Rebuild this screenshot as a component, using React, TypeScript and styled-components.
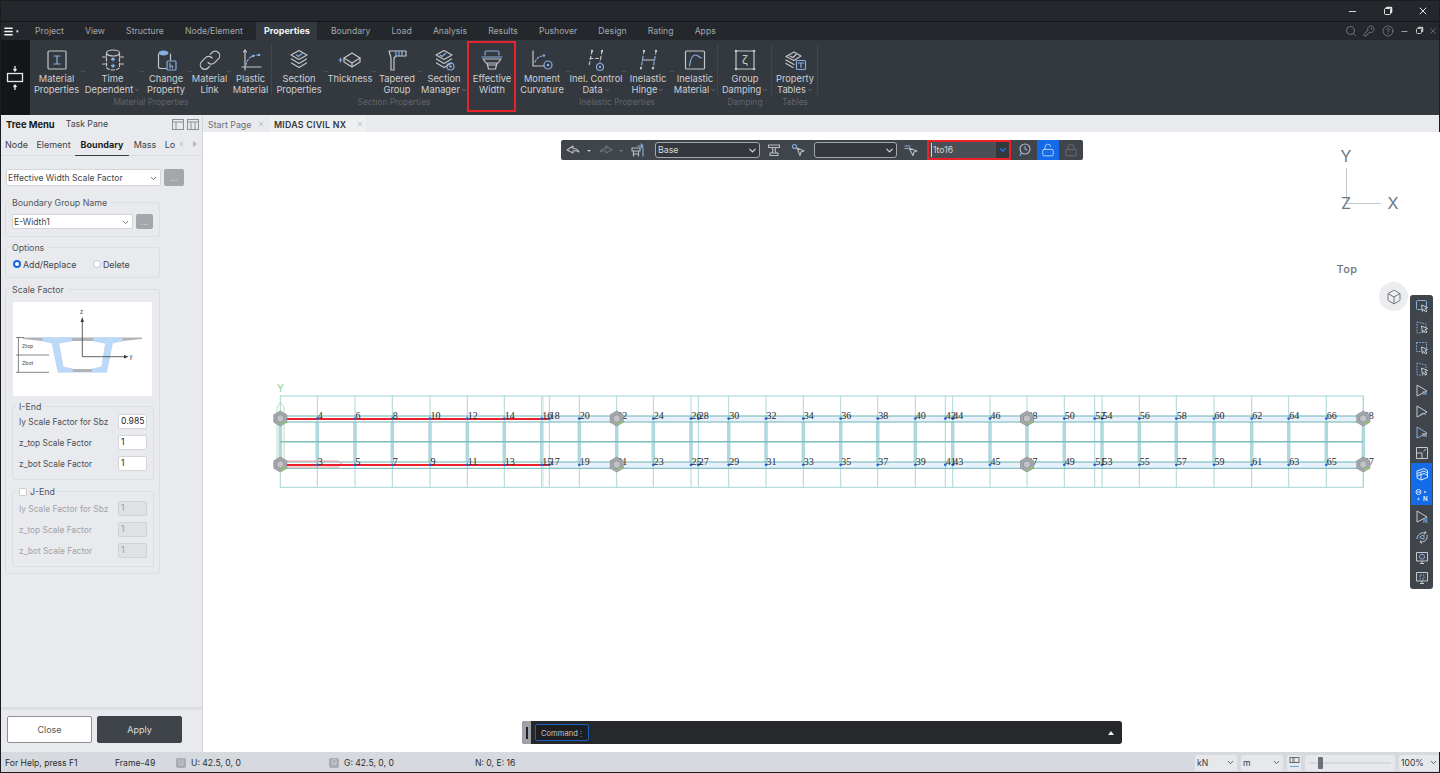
import React from 'react';
import styled, { createGlobalStyle } from 'styled-components';
import { ChevronDown, Search, KeyRound, CircleHelp, X, Minus, Box, LockOpen, Lock, Menu } from 'lucide-react';

const Global = createGlobalStyle`
    html, body { margin: 0; padding: 0; background: #fff; }
    * { box-sizing: border-box; }
    body { font-family: Inter, "Noto Sans", sans-serif; }
`;

const Frame = styled.div`
    width: 1440px;
    height: 773px;
    display: flex;
    flex-direction: column;
    overflow: hidden;
    outline: 1px solid #1a1c1f;
    outline-offset: -1px;
    position: relative;
`;

const TitleBar = styled.div`
    height: 22px;
    background: #24272b;
    border-top: 1px solid #0e0f11;
    border-bottom: 1px solid #14161a;
    display: flex;
    justify-content: flex-end;
    align-items: center;
    color: #e4e6e8;
    padding-right: 11px;
    gap: 26px;
`;

const RestoreGlyph = styled.span<{ $size: number; $color: string }>`
    width: ${p => p.$size}px;
    height: ${p => p.$size}px;
    display: block;
    border: 1.3px solid ${p => p.$color};
    border-radius: 1.5px;
    box-shadow: 1.5px -1.5px 0 -0.2px ${p => p.$color};
`;

const MenuRow = styled.div`
    height: 18px;
    background: #24272b;
    display: flex;
    align-items: stretch;
`;

const Burger = styled.div`
    width: 24.5px;
    display: flex;
    align-items: center;
    padding-left: 3px;
    color: #f0f1f2;
    font-size: 5px;
    gap: 2px;
`;

const MenuTab = styled.div<{ $active?: boolean }>`
    padding: 0 10.6px;
    font-size: 8.65px;
    line-height: 18px;
    font-weight: ${p => (p.$active ? 700 : 400)};
    color: ${p => (p.$active ? '#f4f5f6' : '#a3a8ae')};
    background: ${p => (p.$active ? '#34383f' : 'transparent')};
    ${p => p.$active && 'padding: 0 7.5px; margin: 0 3px; font-size: 9px;'}
`;

const MenuTools = styled.div`
    margin-left: auto;
    display: flex;
    align-items: center;
    gap: 6.5px;
    padding-right: 2px;
    color: #8d9298;
`;

const Ribbon = styled.div`
    height: 76px;
    background: #34383f;
    display: flex;
    border-bottom: 1px solid #eceef0;
`;

const CollapseBox = styled.div`
    width: 30px;
    background: #14171a;
    display: flex;
    align-items: center;
    justify-content: center;
    color: #e6e7e9;
`;

const Group = styled.div<{ $sep?: boolean }>`
    display: flex;
    flex-direction: column;
    position: relative;
    &::after {
        content: '';
        display: ${p => (p.$sep ? 'block' : 'none')};
        position: absolute;
        right: 0;
        top: 4px;
        height: 51px;
        width: 1px;
        background: #42464d;
    }
`;

const GroupItems = styled.div`
    display: flex;
    height: 56px;
`;

const GroupName = styled.div`
    font-size: 8.4px;
    line-height: 12px;
    text-align: center;
    color: #5f646b;
`;

const Item = styled.div<{ $w: number; $mark?: boolean; $tick?: boolean }>`
    width: ${p => p.$w}px;
    position: relative;
    display: flex;
    flex-direction: column;
    align-items: center;
    padding-top: 8px;
    &::before {
        content: '';
        display: ${p => (p.$mark ? 'block' : 'none')};
        position: absolute;
        left: -1px;
        right: 0;
        top: 1px;
        height: 67px;
        border: 2px solid #e8232b;
        z-index: 2;
    }
    &::after {
        content: '';
        display: ${p => (p.$tick ? 'block' : 'none')};
        position: absolute;
        right: -2px;
        top: 31px;
        width: 4px;
        height: 1px;
        background: #4a4e55;
    }
`;

const ItemIcon = styled.svg`
    width: 24px;
    height: 24px;
    display: block;
    fill: none;
    stroke: #c3c7cb;
    stroke-width: 1.2;
    stroke-linecap: round;
    stroke-linejoin: round;
    .b { stroke: #86aee0; }
    .f { fill: #86aee0; stroke: none; }
    .w { fill: #c3c7cb; stroke: none; }
    .t { font-family: Inter, sans-serif; stroke: none; fill: #c3c7cb; }
`;

const ItemLabel = styled.div`
    margin-top: 2px;
    font-size: 9.3px;
    line-height: 10.6px;
    text-align: center;
    color: #ced1d4;
    white-space: nowrap;
`;

const Drop = styled(ChevronDown)`
    display: inline-block;
    vertical-align: -0.5px;
    margin-left: 1px;
    color: #9ea2a7;
`;

const Main = styled.div`
    flex: 1;
    display: flex;
    min-height: 0;
`;

const Panel = styled.div`
    width: 203px;
    background: #e9eaed;
    border-right: 1px solid #d3d5d9;
    display: flex;
    flex-direction: column;
    color: #41464c;
`;

const PaneTabs = styled.div`
    height: 16px;
    display: flex;
    align-items: center;
    padding-left: 6px;
`;

const PaneTab = styled.span<{ $on?: boolean }>`
    font-size: ${p => (p.$on ? '9.4px' : '8.7px')};
    font-weight: ${p => (p.$on ? 700 : 400)};
    color: ${p => (p.$on ? '#16181b' : '#3e4349')};
    margin-right: ${p => (p.$on ? '11px' : '0')};
`;

const PaneIcons = styled.div`
    margin-left: auto;
    display: flex;
    gap: 3px;
    margin-right: 3px;
`;

const PaneGlyph = styled.svg`
    width: 12px;
    height: 11px;
    fill: none;
    stroke: #8b9096;
    stroke-width: 1;
`;

const SubTabs = styled.div`
    height: 24px;
    display: flex;
    align-items: center;
    padding: 4px 0 0 1px;
    border-bottom: 1px solid #dcdee2;
    font-size: 9px;
    color: #3c4147;
`;

const SubTab = styled.span<{ $on?: boolean; $w: number }>`
    width: ${p => p.$w}px;
    height: 20px;
    line-height: 17px;
    text-align: center;
    font-weight: ${p => (p.$on ? 700 : 400)};
    color: ${p => (p.$on ? '#1c1e21' : 'inherit')};
    border-bottom: ${p => (p.$on ? '1.5px solid #3a3e44' : 'none')};
    white-space: nowrap;
`;

const SubArrow = styled.span<{ $right?: boolean; $ml: number }>`
    width: 0;
    height: 0;
    margin: -3px 0 0 ${p => p.$ml}px;
    border-top: 3px solid transparent;
    border-bottom: 3px solid transparent;
    border-right: ${p => (p.$right ? 'none' : '4px solid #cfd1d4')};
    border-left: ${p => (p.$right ? '4px solid #b3b6ba' : 'none')};
`;

const PanelBody = styled.div`
    flex: 1;
    padding: 13px 0 0 5px;
    width: 202px;
`;

const Row = styled.div`
    display: flex;
    gap: 3px;
`;

const Combo = styled.div<{ $w: number; $h: number }>`
    width: ${p => p.$w}px;
    height: ${p => p.$h}px;
    background: #fff;
    border: 1px solid #d3d5d9;
    border-radius: 2px;
    font-size: 8.6px;
    padding: 1px 2px 0 1px;
    color: #41464c;
    display: flex;
    justify-content: space-between;
    align-items: center;
    margin-left: ${p => (p.$w > 140 ? '1px' : '0')};
`;

const MoreBtn = styled.div<{ $w: number; $h: number }>`
    width: ${p => p.$w}px;
    height: ${p => p.$h}px;
    background: #a3a7ac;
    border-radius: 2px;
    color: #e3e4e6;
    font-size: 8px;
    line-height: ${p => p.$h + 1}px;
    text-align: center;
`;

const Field = styled.fieldset<{ $inner?: boolean; $gap?: number; $pad: string }>`
    margin: ${p => p.$gap ?? 5}px ${p => (p.$inner ? '-2px' : '0')} 0 ${p => (p.$inner ? '-1px' : '0')};
    padding: ${p => p.$pad};
    width: ${p => (p.$inner ? 'auto' : '155px')};
    min-width: 0;
    border: 1px solid #dcdee2;
    border-radius: 3px;
`;

const Legend = styled.legend<{ $ml?: number }>`
    margin-left: ${p => p.$ml ?? -3}px;
    padding: 0 3px;
    font-size: 8.8px;
    line-height: 11px;
    color: #50555b;
    display: flex;
    align-items: center;
    gap: 3px;
`;

const Options = styled.div`
    display: flex;
    height: 12px;
    align-items: center;
    font-size: 8.8px;
    padding-left: 1px;
    margin-top: -1px;
`;

const Radio = styled.span<{ $on?: boolean }>`
    width: 8px;
    height: 8px;
    border-radius: 50%;
    margin-right: 2px;
    background: #fff;
    border: ${p => (p.$on ? '2.3px solid #1468e0' : '1px solid #c9cbcf')};
`;

const OptionText = styled.span<{ $w?: number }>`
    width: ${p => p.$w ?? 0}px;
    white-space: nowrap;
`;

const Sketch = styled.svg`
    display: block;
    width: 139px;
    height: 94px;
    background: #fff;
    border-radius: 1px;
`;

const FactorRow = styled.div`
    display: flex;
    justify-content: space-between;
    align-items: center;
    height: 15px;
    margin-bottom: 6px;
    &:last-child { margin-bottom: 0; }
`;

const FactorLabel = styled.span<{ $off?: boolean }>`
    font-size: 8.4px;
    color: ${p => (p.$off ? '#a0a4a9' : '#4a4f55')};
    white-space: nowrap;
`;

const FactorInput = styled.div<{ $off?: boolean }>`
    width: 29px;
    height: 15px;
    font-size: 8.6px;
    line-height: 13px;
    padding-left: 2px;
    border-radius: 2px;
    background: ${p => (p.$off ? '#dfe1e4' : '#fff')};
    border: 1px solid ${p => (p.$off ? '#d0d2d6' : '#d3d5d9')};
    color: ${p => (p.$off ? '#999da2' : '#24272a')};
`;

const Check = styled.span`
    width: 8px;
    height: 8px;
    background: #fff;
    border: 1px solid #c9cbcf;
    border-radius: 1.5px;
`;

const PanelFoot = styled.div`
    height: 45px;
    border-top: 3px solid #dcdee1;
    display: flex;
    gap: 5px;
    padding: 6px 0 0 7px;
`;

const FootBtn = styled.div<{ $primary?: boolean }>`
    width: 85px;
    height: 27px;
    border-radius: 2px;
    font-size: 9px;
    line-height: 26px;
    text-align: center;
    background: ${p => (p.$primary ? '#3f444a' : '#fff')};
    border: 1px solid ${p => (p.$primary ? '#3f444a' : '#8c9095')};
    color: ${p => (p.$primary ? '#dadcde' : '#55595f')};
`;

const Work = styled.div`
    flex: 1;
    display: flex;
    flex-direction: column;
    min-width: 0;
`;

const DocTabs = styled.div`
    height: 16px;
    background: #e9eaed;
    display: flex;
    font-size: 8.8px;
    align-items: center;
`;

const DocTab = styled.div<{ $w: number; $on?: boolean }>`
    width: ${p => p.$w}px;
    height: 16px;
    padding: 0 2px 0 ${p => (p.$on ? '4px' : '5px')};
    margin-right: ${p => (p.$on ? '0' : '3px')};
    display: flex;
    align-items: center;
    justify-content: space-between;
    background: ${p => (p.$on ? '#eeeff1' : '#e9eaed')};
    color: ${p => (p.$on ? '#33373c' : '#6b7076')};
    font-weight: ${p => (p.$on ? 600 : 400)};
    letter-spacing: ${p => (p.$on ? '0.25px' : '0')};
    white-space: nowrap;
    svg { color: #a5a9ae; }
`;

const Viewport = styled.div`
    flex: 1;
    position: relative;
    background: #fff;
`;

const ModelCanvas = styled.svg`
    position: absolute;
    left: 0;
    top: 0;
    width: 1237px;
    height: 620px;
`;

const NodeNo = styled.text`
    font-family: "Liberation Serif", serif;
    font-size: 10px;
    fill: #26292c;
`;

const FloatBar = styled.div`
    position: absolute;
    left: 358px;
    top: 8px;
    width: 522px;
    height: 20px;
    background: #40454b;
    border-radius: 2px;
    display: flex;
    align-items: center;
    padding-left: 5px;
    color: #bfc3c7;
`;

const BarIcon = styled.svg<{ $ml?: number; $dim?: boolean }>`
    width: 14px;
    height: 14px;
    margin-left: ${p => p.$ml ?? 0}px;
    flex: none;
    fill: none;
    stroke: ${p => (p.$dim ? '#6e7379' : '#b9bdc1')};
    stroke-width: 1.1;
    stroke-linejoin: round;
    stroke-linecap: round;
    .b { stroke: #86aee0; }
`;

const Caret = styled.span<{ $dim?: boolean; $l: number; $r: number }>`
    width: 0;
    height: 0;
    flex: none;
    margin: 1px ${p => p.$r}px 0 ${p => p.$l}px;
    border-left: 2px solid transparent;
    border-right: 2px solid transparent;
    border-top: 2.5px solid ${p => (p.$dim ? '#777b80' : '#c8cbce')};
`;

const BarSelect = styled.div<{ $w: number; $ml: number }>`
    width: ${p => p.$w}px;
    height: 16px;
    margin-left: ${p => p.$ml}px;
    flex: none;
    border: 1px solid #a4a8ac;
    border-radius: 3px;
    background: #34383d;
    color: #d5d7d9;
    font-size: 8.8px;
    line-height: 14px;
    padding: 0 1px 0 2px;
    display: flex;
    justify-content: space-between;
    align-items: center;
`;

const RangeSelect = styled.div`
    width: 84px;
    height: 20px;
    margin-left: 9px;
    flex: none;
    border: 2px solid #e8232b;
    background: #4a4f55;
    color: #d5d7d9;
    font-size: 8.6px;
    line-height: 14px;
    padding: 0 0 1px 2px;
    display: flex;
    justify-content: space-between;
    align-items: center;
    span:first-child { border-left: 1px solid #d5d7d9; padding-left: 1px; }
`;

const RangeArrow = styled.span`
    width: 13px;
    height: 16px;
    background: #34383d;
    color: #1d74f0;
    display: flex;
    align-items: center;
    justify-content: center;
`;

const LockBtn = styled.div<{ $on?: boolean; $dim?: boolean; $w: number }>`
    width: ${p => p.$w}px;
    height: 20px;
    background: ${p => (p.$on ? '#136be8' : 'transparent')};
    color: ${p => (p.$on ? '#dfe9f8' : p.$dim ? '#70757a' : '#b9bdc1')};
    display: flex;
    align-items: center;
    justify-content: center;
    flex: none;
`;

const AxisText = styled.span<{ $x: number; $y: number; $size?: number }>`
    position: absolute;
    left: ${p => p.$x}px;
    top: ${p => p.$y}px;
    transform: translate(-50%, -50%);
    font-size: ${p => p.$size ?? 16}px;
    letter-spacing: ${p => (p.$size ? '0.4px' : '0')};
    font-weight: ${p => (p.$size ? 500 : 400)};
    color: #6f767d;
    line-height: 1;
`;

const AxisLine = styled.div<{ $horizontal?: boolean }>`
    position: absolute;
    background: #c2c7cb;
    left: 1143px;
    top: ${p => (p.$horizontal ? '71px' : '36px')};
    width: ${p => (p.$horizontal ? '35px' : '1px')};
    height: ${p => (p.$horizontal ? '1px' : '35px')};
`;

const CubeBtn = styled.div`
    position: absolute;
    left: 1176px;
    top: 150px;
    width: 29px;
    height: 29px;
    border-radius: 50%;
    background: #ebedef;
    color: #5d6369;
    display: flex;
    align-items: center;
    justify-content: center;
`;

const SideBar = styled.div`
    position: absolute;
    left: 1207px;
    top: 163px;
    width: 23px;
    height: 294px;
    background: #40454b;
    border-radius: 3px;
    padding-top: 1px;
    display: flex;
    flex-direction: column;
    align-items: center;
`;

const SideBtn = styled.div<{ $on?: boolean }>`
    width: 21px;
    height: 21px;
    background: ${p => (p.$on ? '#136be8' : 'transparent')};
    display: flex;
    align-items: center;
    justify-content: center;
`;

const SideIcon = styled.svg`
    width: 14px;
    height: 14px;
    fill: none;
    stroke: #9fa9b5;
    stroke-width: 1;
    stroke-linejoin: round;
    .b { stroke: #86aee0; }
    .w { stroke: #c6cacd; }
    .d { stroke-dasharray: 1.6 1.2; }
    .t { font-family: Inter, sans-serif; stroke: none; fill: #d9e6f7; font-weight: 700; }
    .tb { font-family: Inter, sans-serif; stroke: none; fill: #6ea2e6; font-weight: 700; }
`;

const CommandBar = styled.div`
    position: absolute;
    left: 319px;
    top: 589px;
    width: 600px;
    height: 23px;
    background: #26282c;
    border-radius: 3px;
    display: flex;
    align-items: center;
    overflow: hidden;
`;

const Handle = styled.div`
    width: 9px;
    height: 23px;
    background: #9ea2a6;
    display: flex;
    align-items: center;
    justify-content: center;
    &::after {
        content: '';
        width: 2px;
        height: 12px;
        background: #1f2124;
    }
`;

const CommandBox = styled.div`
    width: 54px;
    height: 17px;
    margin-left: 4px;
    border: 1px solid #1a5fc4;
    border-radius: 2px;
    background: #1c1e21;
    color: #c4c7ca;
    font-size: 7.6px;
    line-height: 17px;
    padding-left: 5px;
    position: relative;
    &::after {
        content: '⋮';
        position: absolute;
        right: 3px;
        top: 0;
        color: #8f9397;
    }
`;

const CommandUp = styled.span`
    margin-left: auto;
    margin-right: 8px;
    width: 0;
    height: 0;
    border-left: 3px solid transparent;
    border-right: 3px solid transparent;
    border-bottom: 4px solid #eceded;
`;

const StatusBar = styled.div`
    height: 21px;
    background: #d6d9dd;
    display: flex;
    align-items: center;
    font-size: 8.6px;
    color: #2b2e32;
    padding-top: 1px;
`;

const StatusCell = styled.div<{ $w: number; $pl?: number }>`
    width: ${p => p.$w}px;
    padding-left: ${p => p.$pl ?? 0}px;
    display: flex;
    align-items: center;
    white-space: nowrap;
`;

const Badge = styled.span`
    width: 10px;
    height: 10px;
    background: #a9adb2;
    color: #d6d9dd;
    border-radius: 2px;
    font-size: 7px;
    line-height: 10px;
    text-align: center;
    margin-right: 5px;
`;

const StatusRight = styled.div`
    margin-left: auto;
    display: flex;
    align-items: center;
    gap: 4px;
    margin-top: -1px;
`;

const UnitSelect = styled.div<{ $w: number }>`
    width: ${p => p.$w}px;
    height: 16px;
    background: #e6e8eb;
    border-radius: 2px;
    padding: 0 2px;
    display: flex;
    justify-content: space-between;
    align-items: center;
    font-size: 8.6px;
    color: #33373b;
`;

const SliderBox = styled.div`
    width: 90px;
    height: 16px;
    background: #e6e8eb;
    border-radius: 2px;
    position: relative;
    &::before {
        content: '';
        position: absolute;
        left: 4px;
        right: 4px;
        top: 7px;
        height: 2px;
        background: #d5d8dc;
    }
`;

const Thumb = styled.span`
    position: absolute;
    left: 13px;
    top: 2px;
    width: 5px;
    height: 12px;
    background: #6c7177;
    border-radius: 1px;
`;

const UnitIcon = styled.div`
    width: 14px;
    height: 16px;
    background: #e6e8eb;
    border-radius: 2px;
    display: flex;
    align-items: center;
    justify-content: center;
`;

type IconProps = { name: string };

const cyl = 'M7 6c0-1.4 2.2-2.5 5-2.5s5 1.1 5 2.5-2.2 2.5-5 2.5S7 7.400 7 6z';

const stack = (
    <>
        <path d="M12 2.500 20 7l-8 4.500L4 7z" />
        <path d="M4.500 11 12 15.500 19.500 11" />
        <path d="M4.500 15 12 19.500 19.500 15" />
    </>
);

const RibbonIcon = ({ name }: IconProps) => {
    switch (name) {
        case 'material':
            return <ItemIcon viewBox="0 0 24 24"><rect x="3" y="3" width="18" height="18" rx="1" /><path className="b" d="M9 8h6M12 8v8M9 16h6" /></ItemIcon>;
        case 'time':
            return <ItemIcon viewBox="0 0 24 24"><ellipse cx="12" cy="5" rx="6.500" ry="3" /><path d="M5.500 5v14c0 1.700 2.900 3 6.500 3s6.500-1.300 6.500-3V5" strokeDasharray="3 2" /><path d="M1.500 9h4M22.500 9h-4M1.500 16h4M22.500 16h-4" /><path className="b" d="M12 10v3M12 16v3M10.500 11.500l1.500-1.500 1.500 1.500M10.500 17.500l1.500 1.500 1.500-1.500" /></ItemIcon>;
        case 'change':
            return <ItemIcon viewBox="0 0 24 24"><path className="f" d={cyl} transform="translate(-2.500 -1)" /><path d="M4.500 6v13c0 .8 1.500 1.500 3.500 1.500h4M16.500 6v6" /><rect className="b" x="13" y="13" width="9" height="9" rx="1" /><path className="b" d="M16 15v5M16 18h2.500v2" /></ItemIcon>;
        case 'link':
            return <ItemIcon viewBox="0 0 24 24"><path d="M10 14.500a4.500 4.500 0 0 0 6.400.4l4-4a4.500 4.500 0 0 0-6.400-6.400l-1.800 1.800" /><path d="M14 10a4.500 4.500 0 0 0-6.400-.4l-4 4a4.500 4.500 0 0 0 6.400 6.400l1.800-1.800" /></ItemIcon>;
        case 'plastic':
            return <ItemIcon viewBox="0 0 24 24"><path d="M6 2v20M3 19h19" /><path d="M4.500 4 6 2l1.500 2" /><path className="b" d="M7 17c1-6 5-10 12-10" strokeDasharray="2 2" /><circle className="f" cx="14" cy="8" r="1.300" /><circle className="f" cx="20" cy="7" r="1.300" /></ItemIcon>;
        case 'section':
            return <ItemIcon viewBox="0 0 24 24">{stack}<path className="b" d="m9.500 7 2 1.500 3.500-3" /></ItemIcon>;
        case 'thickness':
            return <ItemIcon viewBox="0 0 24 24"><path d="M14 5 22 10l-8 5-8-5z" /><path d="M6 10v4l8 5 8-5v-4M14 15v4" /><path className="b" d="M1 12h3M2.500 10v4" /></ItemIcon>;
        case 'tapered':
            return <ItemIcon viewBox="0 0 24 24"><path d="M4 3h17v5H11l-2 2v12H6V10z" /><path className="b" d="M11 3v5M14 3v5M17 3v5" /></ItemIcon>;
        case 'manager':
            return <ItemIcon viewBox="0 0 24 24">{stack}<path className="b" d="m8 7 2 1.500 3.500-3" /><circle className="b" cx="18.500" cy="18.500" r="3.500" /><circle className="f" cx="18.500" cy="18.500" r="1.300" /></ItemIcon>;
        case 'effective':
            return <ItemIcon viewBox="0 0 24 24"><path className="b" d="M5 7V4.500c0-1 .6-1.500 1.500-1.500h11c.9 0 1.500.5 1.500 1.500V7" /><path className="b" d="M2 9h20" /><path d="M3 11h18l-3 4H6zM7 15l1.500 6h7L17 15" /><path d="M8 17h8" /></ItemIcon>;
        case 'moment':
            return <ItemIcon viewBox="0 0 24 24"><path d="M3 3v15h11" /><path className="b" d="M5 14c1.500-3 3-5 7-6" strokeDasharray="2 2" /><circle className="f" cx="14" cy="7.500" r="1.200" /><circle className="b" cx="18" cy="17" r="4" /><circle className="f" cx="18" cy="17" r="1.300" /></ItemIcon>;
        case 'control':
            return <ItemIcon viewBox="0 0 24 24"><path d="M8 3 5 18M18 3l-2 11M6 10.500h11" strokeDasharray="3 2.500" /><circle className="w" cx="8" cy="3" r="1.200" /><circle className="w" cx="18" cy="3" r="1.200" /><circle className="b" cx="16" cy="19" r="3.500" /><circle className="f" cx="16" cy="19" r="1.200" /></ItemIcon>;
        case 'hinge':
            return <ItemIcon viewBox="0 0 24 24"><path className="b" d="M8 3 5 21M20 3l-3 18" strokeDasharray="3 2.500" /><path d="M6.500 12h12" /><circle className="w" cx="8" cy="3" r="1.200" /><circle className="w" cx="20" cy="3" r="1.200" /><circle className="w" cx="5" cy="20" r="1.200" /><circle className="w" cx="17" cy="20" r="1.200" /></ItemIcon>;
        case 'inelmat':
            return <ItemIcon viewBox="0 0 24 24"><rect x="2.500" y="3" width="19" height="18" rx="1" /><path className="b" d="M6.500 18c.8-7 2.500-11 6-11 2.500 0 3 2.500 6 3" /></ItemIcon>;
        case 'damping':
            return <ItemIcon viewBox="0 0 24 24"><rect x="3" y="3" width="18" height="18" /><circle className="w" cx="3" cy="3" r="1.300" /><circle className="w" cx="21" cy="3" r="1.300" /><circle className="w" cx="3" cy="21" r="1.300" /><circle className="w" cx="21" cy="21" r="1.300" /><text className="t" x="12" y="16" fontSize="12" textAnchor="middle">ζ</text></ItemIcon>;
        default:
            return <ItemIcon viewBox="0 0 24 24"><path d="M3 8.500 11 4l7 4-7 4.500z" /><path d="M3 12l8 4.500M3 15.500l7 4" /><path d="m7 8 3 1.500 3-3" /><rect className="b" x="13.500" y="12.500" width="9" height="9" rx="1" /><path className="b" d="M15.500 15h5M18 15v4.500" /></ItemIcon>;
    }
};

type ItemDef = { w: number; icon: string; a: string; b?: string; drop?: boolean; mark?: boolean; tick?: boolean };
type GroupDef = { name: string; items: ItemDef[] };

const groups: GroupDef[] = [
    {
        name: 'Material Properties',
        items: [
            { w: 53, icon: 'material', a: 'Material', b: 'Properties', tick: true },
            { w: 59, icon: 'time', a: 'Time', b: 'Dependent', drop: true, tick: true },
            { w: 48, icon: 'change', a: 'Change', b: 'Property', tick: true },
            { w: 39, icon: 'link', a: 'Material', b: 'Link', tick: true },
            { w: 43, icon: 'plastic', a: 'Plastic', b: 'Material' },
        ],
    },
    {
        name: 'Section Properties',
        items: [
            { w: 54, icon: 'section', a: 'Section', b: 'Properties', tick: true },
            { w: 48, icon: 'thickness', a: 'Thickness', tick: true },
            { w: 46, icon: 'tapered', a: 'Tapered', b: 'Group', tick: true },
            { w: 48, icon: 'manager', a: 'Section', b: 'Manager', drop: true },
            { w: 48, icon: 'effective', a: 'Effective', b: 'Width', mark: true },
        ],
    },
    {
        name: 'Inelastic Properties',
        items: [
            { w: 52, icon: 'moment', a: 'Moment', b: 'Curvature', tick: true },
            { w: 56, icon: 'control', a: 'Inel. Control', b: 'Data', drop: true, tick: true },
            { w: 48, icon: 'hinge', a: 'Inelastic', b: 'Hinge', drop: true, tick: true },
            { w: 46, icon: 'inelmat', a: 'Inelastic', b: 'Material', drop: true },
        ],
    },
    { name: 'Damping', items: [{ w: 54, icon: 'damping', a: 'Group', b: 'Damping', drop: true }] },
    { name: 'Tables', items: [{ w: 46, icon: 'tables', a: 'Property', b: 'Tables', drop: true }] },
];

const menus = ['Project', 'View', 'Structure', 'Node/Element', 'Properties', 'Boundary', 'Load', 'Analysis', 'Results', 'Pushover', 'Design', 'Rating', 'Apps'];

const nodeXs = [317.3, 355, 392.3, 430, 467.3, 504.3, 541.7, 549.3, 579.3, 616.7, 653.3, 691, 698.3, 728.7, 766, 803.3, 840.7, 877.7, 915.3, 945.3, 952.7, 990, 1027, 1064.3, 1094.7, 1102, 1139.3, 1176.3, 1214, 1251.7, 1288.7, 1326.3, 1363.3];
const thinXs = [549.3, 698.3, 945.3, 1094.7];
const hexXs = [280.3, 616.7, 1027, 1363.3];

const hexPoints = (cx: number, cy: number, r: number) =>
    [0, 1, 2, 3, 4, 5]
        .map(i => {
            const a = (Math.PI / 3) * i - Math.PI / 2;
            return `${(cx + r * Math.cos(a)).toFixed(1)},${(cy + r * Math.sin(a)).toFixed(1)}`;
        })
        .join(' ');

const Support = ({ x, y }: { x: number; y: number }) => (
    <g>
        <polygon points={hexPoints(x, y, 7.500)} fill="#a4a8ac" stroke="#85898d" strokeWidth="0.7" />
        <polygon points={hexPoints(x, y, 4)} fill="#bfc3c6" stroke="#7e8286" strokeWidth="0.6" />
        <path d={`M${x + 1.500} ${y + 4.500}l4-2.300v2l-4 2.300z`} fill="#86d05a" />
    </g>
);

const Model = () => (
    <ModelCanvas viewBox="203 132 1237 620">
        <rect x="549.3" y="416" width="814" height="6" fill="#e8f1fb" />
        <rect x="549.3" y="462" width="814" height="6" fill="#e8f1fb" />
        <rect x="280.3" y="396" width="1083" height="91.300" fill="none" stroke="#a4d6d6" strokeWidth="1" />
        {nodeXs.map(x => (
            <g key={x}>
                <line x1={x} x2={x} y1={396} y2={487} stroke="#a9d8d8" strokeWidth="1" />
                {!thinXs.includes(x) && <line x1={x} x2={x} y1={422} y2={462} stroke="#afd7de" strokeWidth="3.500" />}
            </g>
        ))}
        <line x1="280.3" x2="280.3" y1="422" y2="462" stroke="#afd7de" strokeWidth="3.500" />
        <line x1="543" x2="543" y1="396" y2="487" stroke="#c4e4e4" strokeWidth="1" />
        {[416, 422, 462, 468.3].map(y => (
            <line key={y} x1="280" x2="1363" y1={y} y2={y} stroke="#6bb4b5" strokeWidth="1" />
        ))}
        <line x1="280" x2="1363" y1="441.7" y2="441.7" stroke="#7cbdc0" strokeWidth="1.400" />
        <path d="M277 462v-55l3.500-4.500 3.500 4.500v55" fill="none" stroke="#a4d8a0" strokeWidth="0.8" />
        <text x="280.5" y="392" fontSize="10" fill="#8cd08c" textAnchor="middle" fontFamily="Inter, sans-serif">Y</text>
        <path d="M281 461h57l4 3-4 3h-57" fill="none" stroke="#f08a8e" strokeWidth="0.8" />
        <line x1="280" x2="549" y1="419" y2="419" stroke="#ee1f2c" strokeWidth="2" />
        <line x1="280" x2="549" y1="465" y2="465" stroke="#ee1f2c" strokeWidth="2" />
        {nodeXs.map(x => (
            <g key={x}>
                <circle cx={x} cy={418.6} r="1.400" fill="#1668e3" />
                <circle cx={x} cy={464.8} r="1.400" fill="#1668e3" />
            </g>
        ))}
        {nodeXs.map((x, i) => (
            <g key={x}>
                <NodeNo x={x + 0.5} y={418.500}>{4 + i * 2}</NodeNo>
                <NodeNo x={x + 0.5} y={464.500}>{3 + i * 2}</NodeNo>
            </g>
        ))}
        {hexXs.map(x => (
            <g key={x}>
                <Support x={x} y={418.5} />
                <Support x={x} y={464.5} />
            </g>
        ))}
    </ModelCanvas>
);

// cross section in the Scale Factor box, coordinates are the page's
const BridgeSketch = () => {
    const left = 'M42 337.500H71.700V341L59 343.300 63 366.700 72.700 369V372.300H58L52 343 42 341z';
    return (
        <Sketch viewBox="13 302 139 94">
            <path d={left} fill="#bcd9f7" stroke="#9cc4ee" strokeWidth="0.4" />
            <path d={left} fill="#bcd9f7" stroke="#9cc4ee" strokeWidth="0.4" transform="matrix(-1 0 0 1 164.600 0)" />
            <path d="M23 337.500H42V341L23 339zM122.600 337.500H142V339L122.600 341z" fill="#b0b4b8" />
            <rect x="71.700" y="337.500" width="21.200" height="3.500" fill="#b0b4b8" />
            <rect x="72.700" y="369" width="19.200" height="3.300" fill="#b0b4b8" />
            <path d="M16 337.500h8M16 355h33M16 372.300h33M18.400 337.500v34.800" stroke="#4c5054" strokeWidth="0.7" fill="none" />
            <path d="M82.300 321v35.700H124" stroke="#33373b" strokeWidth="0.8" fill="none" />
            <path d="m80.600 322 1.700-5 1.700 5zM124 355l4.500 1.700-4.500 1.700z" fill="#33373b" />
            <text x="81.500" y="314" fontSize="5.500" fill="#333" textAnchor="middle" fontFamily="Inter, sans-serif">z</text>
            <text x="131" y="358.500" fontSize="5.500" fill="#333" textAnchor="middle" fontFamily="Inter, sans-serif">y</text>
            <text x="22" y="348" fontSize="5.200" fill="#444" fontFamily="Inter, sans-serif">Ztop</text>
            <text x="22" y="365" fontSize="5.200" fill="#444" fontFamily="Inter, sans-serif">Zbot</text>
        </Sketch>
    );
};

const cursor = <path className="w" d="m6.500 6 6 2.500-2.500 1 2 2.500-1.300 1-2-2.500-1.300 2z" fill="#40454b" />;

const sideIcons: React.ReactNode[] = [
    <><rect className="b" x="1.500" y="1.500" width="10" height="9" rx="1" />{cursor}</>,
    <><path className="b d" d="M2 2 11 4v8L2 13z" />{cursor}</>,
    <><rect className="b d" x="1.500" y="1.500" width="10" height="9" />{cursor}</>,
    <><path className="b d" d="M2 1v12h9V3z" />{cursor}</>,
    <><path className="w" d="M2 2 12 8 2 13z" /><path className="b" d="M7 9h5M8 11h4" /></>,
    <><path className="w" d="M2 2 12 8 2 13z" /><path className="b" d="M5 11l3-2 3 2" /></>,
    <><path className="b" d="M2 2 12 8 2 13z" /><path className="w" d="M7 9h5M8 11h4" /></>,
    <><rect className="w" x="1.500" y="1.500" width="11" height="11" /><path className="w" d="M1.500 7h5.500v5.500M8.500 5.500l2.500-2.500" /></>,
    <><path stroke="#d9e6f7" d="M2 4l7-2.500 3.500 2v7L6 13 2 11z" /><path stroke="#d9e6f7" d="M2 6.500l7-2.500 3.500 2M2 9l7-2.500 3.500 2M6 6v7" /></>,
    <><circle stroke="#d9e6f7" cx="3.500" cy="4" r="2.500" /><path stroke="#d9e6f7" d="M2 4h3" /><circle cx="10" cy="4" r="0.700" stroke="#d9e6f7" /><circle cx="3.500" cy="11" r="0.700" stroke="#d9e6f7" /><text className="t" x="8" y="13" fontSize="6">N</text></>,
    <><path className="w" d="M2 2 12 8 2 13z" /><text className="tb" x="8" y="13.500" fontSize="6">N</text></>,
    <><path className="w" d="M2 9c0-4 4-7 8-6M12 5c1 4-2 7-6 7" /><path className="w" d="m10 1 1 2-2 1M6 10.500l-1 1.500 2 1.500" /><path className="b" d="M5 6.500 9 5v4L5 8z" /></>,
    <><rect className="w" x="1.500" y="1.500" width="11" height="8.500" /><circle className="b" cx="7" cy="5.700" r="2.500" /><path className="w" d="M5 12.500h4M7 10v2.500" /></>,
    <><rect className="w" x="1.500" y="1.500" width="11" height="8.500" /><path className="b d" d="M5 4h4v4H5z" /><path className="w" d="M5 12.500h4M7 10v2.500" /></>,
];

const Factor = ({ label, value, off }: { label: string; value: string; off?: boolean }) => (
    <FactorRow>
        <FactorLabel $off={off}>{label}</FactorLabel>
        <FactorInput $off={off}>{value}</FactorInput>
    </FactorRow>
);

const App = () => (
    <Frame>
        <Global />
        <TitleBar>
            <Minus size={11} strokeWidth={2} />
            <RestoreGlyph $size={7} $color="#e4e6e8" />
            <X size={12} strokeWidth={2} />
        </TitleBar>
        <MenuRow>
            <Burger>
                <Menu size={11} strokeWidth={3} />
                <span>▾</span>
            </Burger>
            {menus.map(m => (
                <MenuTab key={m} $active={m === 'Properties'}>{m}</MenuTab>
            ))}
            <MenuTools>
                <Search size={12} strokeWidth={1.4} />
                <KeyRound size={12} strokeWidth={1.4} />
                <CircleHelp size={12} strokeWidth={1.4} />
                <Minus size={9} strokeWidth={2} color="#c3c6c9" />
                <RestoreGlyph $size={6} $color="#c3c6c9" />
                <X size={10} strokeWidth={1.4} />
            </MenuTools>
        </MenuRow>
        <Ribbon>
            <CollapseBox>
                <svg width="18" height="28" viewBox="0 0 18 28" fill="none" stroke="currentColor" strokeWidth="1.300">
                    <rect x="1.500" y="9.500" width="15" height="8" />
                    <path d="M9 2v5M7.500 5 9 7l1.500-2M9 26v-5M7.500 23 9 21l1.500 2" />
                </svg>
            </CollapseBox>
            {groups.map((g, gi) => (
                <Group key={g.name} $sep={gi !== 1}>
                    <GroupItems>
                        {g.items.map(it => (
                            <Item key={it.a + it.icon} $w={it.w} $mark={it.mark} $tick={it.tick}>
                                <RibbonIcon name={it.icon} />
                                <ItemLabel>
                                    {it.a}
                                    <br />
                                    {it.b}
                                    {it.drop && <Drop size={6} strokeWidth={2} />}
                                </ItemLabel>
                            </Item>
                        ))}
                    </GroupItems>
                    <GroupName>{g.name}</GroupName>
                </Group>
            ))}
        </Ribbon>
        <Main>
            <Panel>
                <PaneTabs>
                    <PaneTab $on>Tree Menu</PaneTab>
                    <PaneTab>Task Pane</PaneTab>
                    <PaneIcons>
                        <PaneGlyph viewBox="0 0 12 11"><rect x="0.500" y="0.500" width="11" height="10" /><path d="M0.500 3h11M4 3v7.500" /></PaneGlyph>
                        <PaneGlyph viewBox="0 0 12 11"><rect x="0.500" y="0.500" width="11" height="10" /><path d="M0.500 3h11M4 3v7.500M8 3v7.500" /></PaneGlyph>
                    </PaneIcons>
                </PaneTabs>
                <SubTabs>
                    <SubTab $w={31}>Node</SubTab>
                    <SubTab $w={43}>Element</SubTab>
                    <SubTab $w={54} $on>Boundary</SubTab>
                    <SubTab $w={32}>Mass</SubTab>
                    <SubTab $w={18}>Lo</SubTab>
                    <SubArrow $ml={0} />
                    <SubArrow $ml={10} $right />
                </SubTabs>
                <PanelBody>
                    <Row>
                        <Combo $w={155} $h={17}>
                            Effective Width Scale Factor
                            <ChevronDown size={9} />
                        </Combo>
                        <MoreBtn $w={20} $h={17}>...</MoreBtn>
                    </Row>
                    <Field $gap={11} $pad="6px 6px 7px">
                        <Legend>Boundary Group Name</Legend>
                        <Row>
                            <Combo $w={122} $h={15}>
                                E-Width1
                                <ChevronDown size={9} />
                            </Combo>
                            <MoreBtn $w={17} $h={15}>...</MoreBtn>
                        </Row>
                    </Field>
                    <Field $pad="6px 6px 7px">
                        <Legend>Options</Legend>
                        <Options>
                            <Radio $on />
                            <OptionText $w={70}>Add/Replace</OptionText>
                            <Radio />
                            <OptionText>Delete</OptionText>
                        </Options>
                    </Field>
                    <Field $gap={6} $pad="7px 7px 6px">
                        <Legend $ml={-4}>Scale Factor</Legend>
                        <BridgeSketch />
                        <Field $inner $pad="2px 6px 8px">
                            <Legend>I-End</Legend>
                            <Factor label="Iy Scale Factor for Sbz" value="0.985" />
                            <Factor label="z_top Scale Factor" value="1" />
                            <Factor label="z_bot Scale Factor" value="1" />
                        </Field>
                        <Field $inner $gap={6} $pad="4px 6px 8px">
                            <Legend><Check />J-End</Legend>
                            <Factor off label="Iy Scale Factor for Sbz" value="1" />
                            <Factor off label="z_top Scale Factor" value="1" />
                            <Factor off label="z_bot Scale Factor" value="1" />
                        </Field>
                    </Field>
                </PanelBody>
                <PanelFoot>
                    <FootBtn>Close</FootBtn>
                    <FootBtn $primary>Apply</FootBtn>
                </PanelFoot>
            </Panel>
            <Work>
                <DocTabs>
                    <DocTab $w={64}>Start Page<X size={8} /></DocTab>
                    <DocTab $w={96} $on>MIDAS CIVIL NX<X size={8} /></DocTab>
                </DocTabs>
                <Viewport>
                    <Model />
                    <FloatBar>
                        <BarIcon viewBox="0 0 14 14"><path d="M1 7 7 3v2.500c3 0 5 1 6 3.500-2-1-4-1.500-6-1V10z" /></BarIcon>
                        <Caret $l={7} $r={8} />
                        <BarIcon $dim viewBox="0 0 14 14"><path d="M13 7 7 3v2.500c-3 0-5 1-6 3.500 2-1 4-1.500 6-1V10z" /></BarIcon>
                        <Caret $dim $l={6} $r={8} />
                        <BarIcon viewBox="0 0 14 14"><path d="M1 5h8v3H1zM2.500 8v5M7.500 8v5M2 11h5" /><path className="b" d="M7 3h5M10 1l2 2-2 2M12 5v8" /></BarIcon>
                        <BarSelect $w={105} $ml={10}>Base<ChevronDown size={11} strokeWidth={2.600} /></BarSelect>
                        <BarIcon $ml={7} viewBox="0 0 14 14"><path d="M1.500 2h11v2.500h-11zM3 10h8v2.500H3zM5 4.500h4L8 7l1 3H5l1-3z" /></BarIcon>
                        <BarIcon $ml={10} viewBox="0 0 14 14"><circle className="b" cx="3.500" cy="3.500" r="2" /><path d="m6 5 7 3-3 1-1 3.500z" /></BarIcon>
                        <BarSelect $w={83} $ml={9}>&nbsp;<ChevronDown size={11} strokeWidth={2.600} /></BarSelect>
                        <BarIcon $ml={7} viewBox="0 0 14 14"><path className="b" d="M1 3h5M1 5.500h3" /><path d="m5 5 8 3-3 1-1 3.500z" /></BarIcon>
                        <RangeSelect>
                            <span>1to16</span>
                            <RangeArrow><ChevronDown size={10} strokeWidth={3} /></RangeArrow>
                        </RangeSelect>
                        <LockBtn $w={26}>
                            <BarIcon viewBox="0 0 14 14"><circle cx="8" cy="6" r="5" /><path d="M3 12.500 4.500 9.500M8 3.500V6l2 1" className="b" /></BarIcon>
                        </LockBtn>
                        <LockBtn $w={22} $on><LockOpen size={14} strokeWidth={1.3} /></LockBtn>
                        <LockBtn $w={23} $dim><Lock size={14} strokeWidth={1.3} /></LockBtn>
                    </FloatBar>
                    <AxisText $x={1143} $y={24}>Y</AxisText>
                    <AxisLine />
                    <AxisLine $horizontal />
                    <AxisText $x={1143} $y={71}>Z</AxisText>
                    <AxisText $x={1190} $y={71}>X</AxisText>
                    <AxisText $x={1144} $y={137} $size={11}>Top</AxisText>
                    <CubeBtn><Box size={16} strokeWidth={1.3} /></CubeBtn>
                    <SideBar>
                        {sideIcons.map((icon, i) => (
                            <SideBtn key={i} $on={i === 8 || i === 9}>
                                <SideIcon viewBox="0 0 14 14">{icon}</SideIcon>
                            </SideBtn>
                        ))}
                    </SideBar>
                    <CommandBar>
                        <Handle />
                        <CommandBox>Command</CommandBox>
                        <CommandUp />
                    </CommandBar>
                </Viewport>
            </Work>
        </Main>
        <StatusBar>
            <StatusCell $w={115} $pl={5}>For Help, press F1</StatusCell>
            <StatusCell $w={61}>Frame-49</StatusCell>
            <StatusCell $w={153}><Badge>U</Badge>U: 42.5, 0, 0</StatusCell>
            <StatusCell $w={146}><Badge>G</Badge>G: 42.5, 0, 0</StatusCell>
            <StatusCell $w={100}>N: 0, E: 16</StatusCell>
            <StatusRight>
                <UnitSelect $w={42}>kN<ChevronDown size={9} strokeWidth={2} /></UnitSelect>
                <UnitSelect $w={42}>m<ChevronDown size={9} strokeWidth={2} /></UnitSelect>
                <UnitIcon>
                    <svg width="11" height="13" viewBox="0 0 11 13" fill="none" stroke="#666b70" strokeWidth="1">
                        <rect x="1" y="1.500" width="9" height="5" />
                        <path d="M3 3h3M3 5h3" />
                        <path d="M1 10.500h9" stroke="#6ea2e6" />
                    </svg>
                </UnitIcon>
                <SliderBox><Thumb /></SliderBox>
                <UnitSelect $w={41}>100%<ChevronDown size={9} strokeWidth={2} /></UnitSelect>
            </StatusRight>
        </StatusBar>
    </Frame>
);

export default App;
